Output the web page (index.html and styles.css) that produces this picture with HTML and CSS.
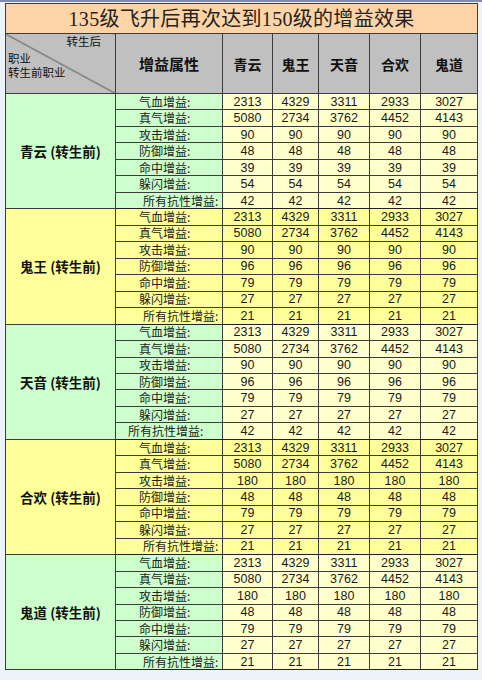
FILE: index.html
```html
<!DOCTYPE html>
<html lang="zh">
<head>
<meta charset="utf-8">
<link rel="stylesheet" href="styles.css">
</head>
<body>
<div class="topbar"></div>
<table class="tbl">
  <colgroup>
    <col class="c-role"><col class="c-attr"><col class="c-v1"><col class="c-v2"><col class="c-v3"><col class="c-v4"><col class="c-v5">
  </colgroup>
  <tr class="r-title"><td colspan="7" class="title">135级飞升后再次达到150级的增益效果</td></tr>
  <tr class="r-head">
    <td class="corner">
      <div class="corner-in">
        <div class="after">转生后</div>
        <div class="before">职业</div>
        <div class="before2">转生前职业</div>
      </div>
    </td>
    <td class="hd hd-attr">增益属性</td>
    <td class="hd">青云</td>
    <td class="hd">鬼王</td>
    <td class="hd">天音</td>
    <td class="hd">合欢</td>
    <td class="hd">鬼道</td>
  </tr>

  <tbody class="grp green">
  <tr><td class="role" rowspan="7">青云 (转生前)</td><td class="attr">气血增益:</td><td>2313</td><td>4329</td><td>3311</td><td>2933</td><td>3027</td></tr>
  <tr><td class="attr">真气增益:</td><td>5080</td><td>2734</td><td>3762</td><td>4452</td><td>4143</td></tr>
  <tr><td class="attr">攻击增益:</td><td>90</td><td>90</td><td>90</td><td>90</td><td>90</td></tr>
  <tr><td class="attr">防御增益:</td><td>48</td><td>48</td><td>48</td><td>48</td><td>48</td></tr>
  <tr><td class="attr">命中增益:</td><td>39</td><td>39</td><td>39</td><td>39</td><td>39</td></tr>
  <tr><td class="attr">躲闪增益:</td><td>54</td><td>54</td><td>54</td><td>54</td><td>54</td></tr>
  <tr><td class="attr all">所有抗性增益:</td><td>42</td><td>42</td><td>42</td><td>42</td><td>42</td></tr>
  </tbody>

  <tbody class="grp yellow">
  <tr><td class="role" rowspan="7">鬼王 (转生前)</td><td class="attr">气血增益:</td><td>2313</td><td>4329</td><td>3311</td><td>2933</td><td>3027</td></tr>
  <tr><td class="attr">真气增益:</td><td>5080</td><td>2734</td><td>3762</td><td>4452</td><td>4143</td></tr>
  <tr><td class="attr">攻击增益:</td><td>90</td><td>90</td><td>90</td><td>90</td><td>90</td></tr>
  <tr><td class="attr">防御增益:</td><td>96</td><td>96</td><td>96</td><td>96</td><td>96</td></tr>
  <tr><td class="attr">命中增益:</td><td>79</td><td>79</td><td>79</td><td>79</td><td>79</td></tr>
  <tr><td class="attr">躲闪增益:</td><td>27</td><td>27</td><td>27</td><td>27</td><td>27</td></tr>
  <tr><td class="attr all">所有抗性增益:</td><td>21</td><td>21</td><td>21</td><td>21</td><td>21</td></tr>
  </tbody>

  <tbody class="grp green">
  <tr><td class="role" rowspan="7">天音 (转生前)</td><td class="attr">气血增益:</td><td>2313</td><td>4329</td><td>3311</td><td>2933</td><td>3027</td></tr>
  <tr><td class="attr">真气增益:</td><td>5080</td><td>2734</td><td>3762</td><td>4452</td><td>4143</td></tr>
  <tr><td class="attr">攻击增益:</td><td>90</td><td>90</td><td>90</td><td>90</td><td>90</td></tr>
  <tr><td class="attr">防御增益:</td><td>96</td><td>96</td><td>96</td><td>96</td><td>96</td></tr>
  <tr><td class="attr">命中增益:</td><td>79</td><td>79</td><td>79</td><td>79</td><td>79</td></tr>
  <tr><td class="attr">躲闪增益:</td><td>27</td><td>27</td><td>27</td><td>27</td><td>27</td></tr>
  <tr><td class="attr all-left">所有抗性增益:</td><td>42</td><td>42</td><td>42</td><td>42</td><td>42</td></tr>
  </tbody>

  <tbody class="grp yellow">
  <tr><td class="role" rowspan="7">合欢 (转生前)</td><td class="attr">气血增益:</td><td>2313</td><td>4329</td><td>3311</td><td>2933</td><td>3027</td></tr>
  <tr><td class="attr">真气增益:</td><td>5080</td><td>2734</td><td>3762</td><td>4452</td><td>4143</td></tr>
  <tr><td class="attr">攻击增益:</td><td>180</td><td>180</td><td>180</td><td>180</td><td>180</td></tr>
  <tr><td class="attr">防御增益:</td><td>48</td><td>48</td><td>48</td><td>48</td><td>48</td></tr>
  <tr><td class="attr">命中增益:</td><td>79</td><td>79</td><td>79</td><td>79</td><td>79</td></tr>
  <tr><td class="attr">躲闪增益:</td><td>27</td><td>27</td><td>27</td><td>27</td><td>27</td></tr>
  <tr><td class="attr all">所有抗性增益:</td><td>21</td><td>21</td><td>21</td><td>21</td><td>21</td></tr>
  </tbody>

  <tbody class="grp green">
  <tr><td class="role" rowspan="7">鬼道 (转生前)</td><td class="attr">气血增益:</td><td>2313</td><td>4329</td><td>3311</td><td>2933</td><td>3027</td></tr>
  <tr><td class="attr">真气增益:</td><td>5080</td><td>2734</td><td>3762</td><td>4452</td><td>4143</td></tr>
  <tr><td class="attr">攻击增益:</td><td>180</td><td>180</td><td>180</td><td>180</td><td>180</td></tr>
  <tr><td class="attr">防御增益:</td><td>48</td><td>48</td><td>48</td><td>48</td><td>48</td></tr>
  <tr><td class="attr">命中增益:</td><td>79</td><td>79</td><td>79</td><td>79</td><td>79</td></tr>
  <tr><td class="attr">躲闪增益:</td><td>27</td><td>27</td><td>27</td><td>27</td><td>27</td></tr>
  <tr><td class="attr all">所有抗性增益:</td><td>21</td><td>21</td><td>21</td><td>21</td><td>21</td></tr>
  </tbody>
</table>
</body>
</html>
```
FILE: styles.css
```css
html, body { margin: 0; padding: 0; }
body { background: #edf3fb; width: 482px; height: 680px; overflow: hidden; }
.topbar { height: 2px; background: #7e8cb4; margin-bottom: 1px; }
.tbl {
  border-collapse: collapse;
  margin-left: 5px;
  width: 472px;
  table-layout: fixed;
  font-family: "Noto Sans CJK SC", sans-serif;
  border: 1px solid #111;
}
.c-role { width: 110px; } .c-attr { width: 107px; }
.c-v1 { width: 50px; } .c-v2 { width: 46px; } .c-v3 { width: 51px; } .c-v4 { width: 51px; } .c-v5 { width: 57px; }
td { border: 1px solid #3c3c3c; padding: 0; }
.r-title td { height: 29px; }
.title { background: #fdd4a6; text-align: center; font-family: "Liberation Serif", "Noto Sans CJK SC", serif; font-size: 20px; color: #222; letter-spacing: 0.3px; line-height: 28px; }
.r-head td { height: 59px; background: #c0c0c0; }
.hd { text-align: center; font-weight: bold; font-size: 14px; color: #111; }
.hd-attr { font-size: 15px; }
.corner { background: linear-gradient(to top right, transparent calc(50% - 0.8px), #444 50%, transparent calc(50% + 0.8px)) #c0c0c0 !important; vertical-align: top; }
.corner-in { display: flex; flex-direction: column; font-family: "Liberation Sans", "Noto Sans CJK SC", sans-serif; font-size: 11.5px; color: #111; padding: 1px 2px 0 2px; }
.corner-in div { height: 14px; line-height: 14px; }
.after { align-self: flex-end; margin-right: 12px; }
.before { margin-top: 3px; }

.grp td { height: 15.48px; line-height: 14px; font-size: 12.5px; text-align: center; font-family: "Liberation Sans", Arial, sans-serif; color: #1a1a1a; }
.grp td.role { font-family: "Noto Sans CJK SC", sans-serif; font-weight: bold; font-size: 13.5px; color: #111; }
.grp td.attr { font-family: "Noto Sans CJK SC", sans-serif; font-size: 12px; text-align: left; padding-left: 23px; color: #222; }
.grp td.all { padding-left: 27px; }
.grp td.all-left { padding-left: 12px; }
.green td { background: #ffffcc; }
.green td.role, .green td.attr { background: #ccffcc; }
.yellow td { background: #ffff99; }
.yellow td.role, .yellow td.attr { background: #ffff99; }
.grp tr:last-child td { border-bottom-color: #222; }
```
